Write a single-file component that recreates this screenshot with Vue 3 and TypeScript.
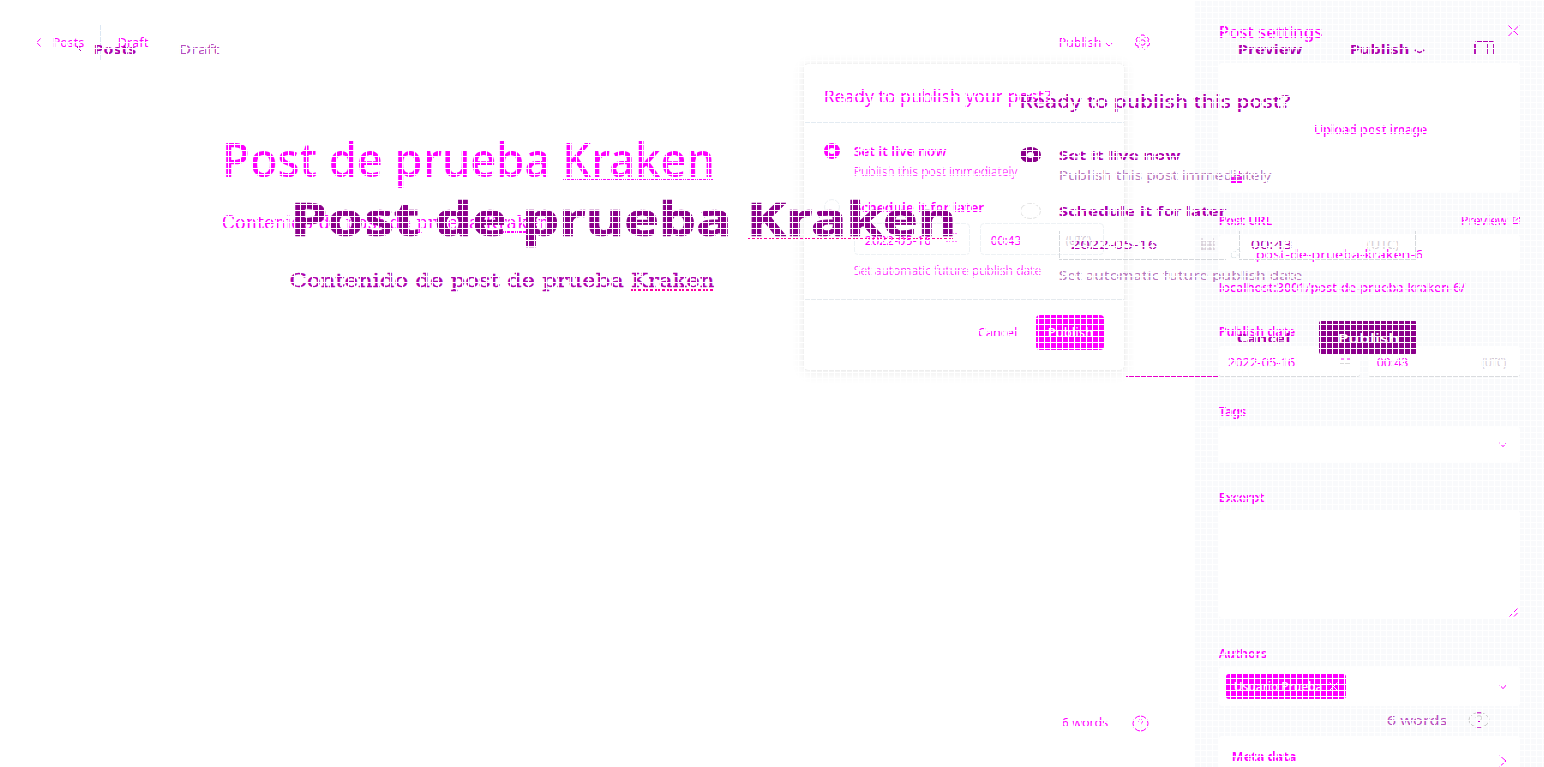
<script setup lang="ts">
import type { Directive } from 'vue'

// Stretches a line of text horizontally so its ink spans the given width.
const vFit: Directive<HTMLElement, number> = {
  mounted(el, binding) {
    const size = parseFloat(getComputedStyle(el).fontSize)
    const natural = el.getBoundingClientRect().width
    const scale = binding.value / (natural - size * 0.04)
    el.style.transformOrigin = '0 50%'
    el.style.transform = `translateX(${-size * 0.02 * scale}px) scaleX(${scale})`
    el.style.marginRight = `${binding.value - natural}px`
  },
}
</script>

<template>
  <div class="board">
    <div class="screen first">
      <main class="editor">
        <header class="bar">
          <svg class="back" width="5" height="9" viewBox="0 0 5 9"><path d="M4.5 .5 .8 4.5 4.5 8.5" /></svg>
          <span v-fit="31" class="t posts">Posts</span>
          <i class="rule"></i>
          <span v-fit="30" class="t">Draft</span>
          <span v-fit="42" class="t publish">Publish</span>
          <svg class="caret" width="8" height="5" viewBox="0 0 8 5"><path d="M.5 .7 4 4 7.500 .7" /></svg>
          <svg class="gear" width="17" height="17" viewBox="0 0 17 17">
            <circle cx="8.500" cy="8.500" r="2.700" />
            <path d="M7 1h3l.6 2.200 2.200-.5 2 2.500-1 2 1.800 1.500-.6 2.800-2.200.3-.1 2.200-2.500 1.200L8.500 13.500 6.700 15.200 4.200 14l-.1-2.200-2.200-.3-.6-2.800 1.800-1.500-1-2 2-2.500 2.200.5z" />
          </svg>
        </header>
        <h1><span v-fit="491" class="t">Post de prueba Kraken</span></h1>
        <i class="spell title-spell"></i>
        <p class="body"><span v-fit="327" class="t">Contenido de post de prueba Kraken</span></p>
        <i class="spell body-spell"></i>
        <footer class="foot">
          <span v-fit="46" class="t">6 words</span>
          <svg width="17" height="17" viewBox="0 0 17 17"><circle cx="8.500" cy="8.500" r="7.500" /><path d="M6.500 6.500c.2-2.600 4.200-2.400 4 0-.1 1.300-1.700 1.400-1.800 3M8.700 11.300v1" /></svg>
        </footer>
      </main>

      <aside class="side">
        <header class="side-head">
          <span v-fit="103" class="t">Post settings</span>
          <svg width="12" height="12" viewBox="0 0 12 12"><path d="M.5 .5 11 11M11 .5 .5 11" /></svg>
        </header>
        <div class="card image-card">
          <div class="upload"><span v-fit="113" class="t">Upload post image</span></div>
          <i class="unsplash"></i>
        </div>
        <div class="label spread">
          <span v-fit="53" class="t">Post URL</span>
          <span class="open">
            <span v-fit="46" class="t">Preview</span>
            <svg width="8" height="8" viewBox="0 0 8 8"><path d="M3.500 1H1v6.500h6V4.500M4 4.500 7.500 .5M5 .5h2.500V3" /></svg>
          </span>
        </div>
        <div class="card field url">
          <svg width="11" height="12" viewBox="0 0 11 12"><circle cx="4" cy="8" r="3" /><path d="M5 5l3-3 2 2-1 5" /></svg>
          <span v-fit="167" class="t">post-de-prueba-kraken-6</span>
        </div>
        <div class="hint"><span v-fit="246" class="t">localhost:3001/post-de-prueba-kraken-6/</span></div>
        <div class="label date-label"><span v-fit="76" class="t">Publish date</span></div>
        <div class="dates">
          <div class="card date">
            <span v-fit="67" class="t">2022-05-16</span>
            <svg width="11" height="13" viewBox="0 0 11 13"><path d="M1 2h9M1 7h3M7 7h3" /><path class="mute" d="M0 11.500h11" /></svg>
          </div>
          <div class="card time"><span v-fit="31" class="t">00:43</span><span v-fit="24" class="t zone">(UTC)</span></div>
        </div>
        <div class="label"><span v-fit="27" class="t">Tags</span></div>
        <div class="card select tags"><svg width="8" height="6" viewBox="0 0 8 6"><path d="M.5 .7 4 4.700 7.500 .7" /></svg></div>
        <div class="label"><span v-fit="45" class="t">Excerpt</span></div>
        <div class="card excerpt"><svg width="9" height="9" viewBox="0 0 9 9"><path d="M.5 8.500l8-8M5 8.500l3.500-3.500" /></svg></div>
        <div class="label authors-label"><span v-fit="48" class="t">Authors</span></div>
        <div class="card select authors">
          <div class="chip">
            <span v-fit="88" class="t">Usuario Prueba</span>
            <svg width="9" height="9" viewBox="0 0 9 9"><path d="M.5 .5l8 8M8.500 .5l-8 8" /></svg>
          </div>
          <svg width="8" height="6" viewBox="0 0 8 6"><path d="M.5 .7 4 4.700 7.500 .7" /></svg>
        </div>
        <div class="card meta">
          <span v-fit="64" class="t">Meta data</span>
          <svg width="8" height="12" viewBox="0 0 8 12"><path d="M.7 .5 7 6 .7 11.500" /></svg>
        </div>
      </aside>

      <section class="dialog">
        <header><span v-fit="227" class="t">Ready to publish your post?</span></header>
        <div class="choices">
          <div class="choice">
            <i class="dot on"></i>
            <div>
              <div class="strong"><span v-fit="92" class="t">Set it live now</span></div>
              <div class="note"><span v-fit="163" class="t">Publish this post immediately</span></div>
            </div>
          </div>
          <div class="choice later">
            <i class="dot"></i>
            <div>
              <div class="strong"><span v-fit="130" class="t">Schedule it for later</span></div>
              <div class="when">
                <div class="box">
                  <span v-fit="66" class="t">2022-05-16</span>
                  <svg width="11" height="9" viewBox="0 0 11 9"><path d="M0 1h4M7 1h4M0 8h4M6 8h5" /></svg>
                </div>
                <div class="box clock"><span v-fit="30" class="t">00:43</span><span v-fit="25" class="t zone">(UTC)</span></div>
              </div>
              <div class="note"><span v-fit="187" class="t">Set automatic future publish date</span></div>
            </div>
          </div>
        </div>
        <footer><span v-fit="39" class="t">Cancel</span><div class="go"><span v-fit="45" class="t">Publish</span></div></footer>
      </section>
    </div>

    <div class="screen second">
      <header class="bar2">
        <svg class="back2" width="8" height="9" viewBox="0 0 8 9"><path d="M6.500 4 3 4l4 4" /></svg>
        <span v-fit="42" class="t b">Posts</span>
        <span v-fit="40" class="t draft2">Draft</span>
        <span v-fit="64" class="t b preview2">Preview</span>
        <span v-fit="59" class="t b publish2">Publish</span>
        <svg class="caret2" width="11" height="5" viewBox="0 0 11 5"><path d="M.8 .8Q5.500 6 10.200 .8" /></svg>
        <svg class="panel2" width="21" height="14" viewBox="0 0 21 14"><path d="M1 13V3M1.500 .5h18M20 3v10M14 3v10" /></svg>
      </header>
      <h1><span v-fit="663" class="t">Post de prueba Kraken</span></h1>
      <i class="spell title-spell"></i>
      <p class="body"><span v-fit="424" class="t">Contenido de post de prueba Kraken</span></p>
      <i class="spell body-spell"></i>

      <section class="dialog2">
        <div class="head2"><span v-fit="270" class="t">Ready to publish this post?</span></div>
        <div class="choice2">
          <i class="dot2 on"></i>
          <div>
            <div class="strong"><span v-fit="121" class="t">Set it live now</span></div>
            <div class="note"><span v-fit="212" class="t">Publish this post immediately</span></div>
          </div>
        </div>
        <div class="choice2 later2">
          <i class="dot2"></i>
          <div>
            <div class="strong"><span v-fit="167" class="t">Schedule it for later</span></div>
            <div class="when2">
              <div class="box2 day2">
                <span v-fit="86" class="t">2022-05-16</span>
                <svg width="17" height="13" viewBox="0 0 17 13"><path d="M1 3h15M1 7h15M1 11h15M3 0v12M7 2v10M11 2v10M14 0v12" /></svg>
              </div>
              <div class="box2 hour2"><span v-fit="41" class="t">00:43</span><span v-fit="32" class="t zone">(UTC)</span></div>
            </div>
            <div class="note"><span v-fit="243" class="t">Set automatic future publish date</span></div>
          </div>
        </div>
        <div class="actions2"><span v-fit="53" class="t b">Cancel</span><div class="go2"><span v-fit="61" class="t">Publish</span></div></div>
      </section>
      <i class="edge"></i>
      <footer class="foot2">
        <span v-fit="60" class="t">6 words</span>
        <svg width="22" height="16" viewBox="0 0 22 16"><ellipse cx="11" cy="8" rx="10" ry="7.300" /><path d="M8 6c0-3 6-3 6 0 0 2-3 2-3 4" /><path class="pink" d="M9 .8h4M9 15.200h4M10 9.500h2" /></svg>
      </footer>
    </div>
    <div class="mesh"></div>
  </div>
</template>

<style>
body { background: #fff; overflow: hidden; }
</style>

<style scoped>
.board { position: relative; width: 1544px; height: 767px; overflow: hidden; background: #fff; font-family: "Noto Sans", "Open Sans", sans-serif; font-size: 12.5px; line-height: 20px; color: #f0f; }
.board * { box-sizing: border-box; }
.screen { position: absolute; inset: 0; }
.first { display: flex; }
.t { display: inline-block; flex: none; white-space: nowrap; }
.side .t, .note .t, .box2 .t { translate: 0 1px; }
i { display: block; flex: none; }
svg { display: block; flex: none; fill: none; stroke: #f0f; }
h1, p { margin: 0; }
.mesh { position: absolute; inset: 0; pointer-events: none; background: repeating-linear-gradient(90deg, #fff 0 1px, transparent 1px 6px), repeating-linear-gradient(#fff 0 1px, transparent 1px 6px); }

.editor { width: 1195px; flex: none; height: 767px; display: flex; flex-direction: column; }
.bar { height: 129px; padding: 33px 0 0 36px; display: flex; align-items: flex-start; }
.back { margin: 5px 12px 0 0; }
.posts { margin-right: 0; }
.rule { width: 1px; height: 36px; margin: -9px 17px 0 16px; background: #dbe7f3; }
.publish { margin-left: 911px; }
.caret { margin: 9px 0 0 4px; }
.gear { margin: 1px 0 0 21px; }
.first h1 { height: 59px; padding-left: 223px; font-size: 48px; line-height: 60px; font-weight: 500; }
.spell { height: 1px; background: repeating-linear-gradient(90deg, currentColor 0 3px, transparent 3px 4px); }
.first .title-spell { width: 150px; margin: -9px 0 0 563px; }
.body { font-family: "DejaVu Serif", serif; font-size: 19px; line-height: 26px; }
.first .body { height: 26px; margin-top: 29px; padding-left: 222px; }
.first .body-spell { width: 62px; margin: -4px 0 0 487px; height: 2px; }
.foot { margin-top: 480px; padding-left: 1062px; display: flex; align-items: flex-start; }
.foot svg { margin: 2px 0 0 24px; }

.side { width: 349px; height: 767px; padding: 0 24px; overflow: hidden; background: #f9fafc; }
.side-head { height: 63px; padding-top: 21px; display: flex; justify-content: space-between; font-size: 17px; font-weight: 500; }
.side-head svg { margin-top: 4px; }
.card { background: #fff; border-radius: 3px; }
.image-card { height: 129px; padding: 49px 12px 0; }
.upload { width: 135px; height: 34px; margin: 0 auto 0 72px; padding: 7px 0 0 11px; border-radius: 4px; font-weight: 500; }
.unsplash { width: 12px; height: 12px; margin-top: 25px; background: linear-gradient(#fff, #fff) 50% 0 / 4px 3px no-repeat, linear-gradient(#f0f, #f0f) 50% 0 / 5px 5px no-repeat, linear-gradient(#f0f, #f0f) 0 100% / 12px 6px no-repeat; }
.label { height: 20px; margin-top: 24px; font-weight: 600; }
.spread { margin-top: 18px; display: flex; justify-content: space-between; }
.open { display: flex; align-items: center; gap: 5px; font-weight: 400; }
.field { height: 36px; margin-top: 5px; padding: 6px 0 0 11px; display: flex; }
.url { font-size: 13px; padding-top: 8px; }
.url svg { margin: 4px 15px 0 0; stroke: #dfe6ea; }
.hint { height: 20px; margin-top: 6px; font-weight: 500; }
.dates { display: flex; gap: 8px; height: 31px; margin-top: 5px; }
.date, .time { padding: 6px 9px 0; display: flex; justify-content: space-between; border-bottom: 1px solid #dadcdf; }
.date { width: 141px; border-top: 0; }
.time { flex: 1; padding-right: 14px; }
.zone { color: #d3c9d5; }
.mute { stroke: #d9d9d9; }
.select { display: flex; align-items: center; justify-content: flex-end; padding-right: 13px; }
.tags { height: 36px; margin-top: 6px; }
.excerpt { height: 107px; margin-top: 4px; display: flex; align-items: flex-end; justify-content: flex-end; padding: 0 2px 1px 0; }
.authors-label { margin-top: 25px; }
.authors { height: 39px; margin-top: 4px; padding-left: 7px; justify-content: space-between; }
.chip { width: 120px; height: 25px; padding: 2px 8px; display: flex; align-items: flex-start; justify-content: space-between; background: #f0f; border-radius: 3px; color: #fff; font-weight: 500; }
.chip svg { margin-top: 6px; stroke: #fff; }
.meta { height: 60px; margin-top: 30px; padding: 10px 13px 0; display: flex; justify-content: space-between; font-weight: 700; }
.meta svg { margin-top: 9px; }

.dialog { position: absolute; left: 804px; top: 64px; width: 320px; height: 306px; background: #fff; border-radius: 4px; box-shadow: 0 2px 14px rgba(0, 0, 0, .09), 0 0 1px rgba(0, 0, 0, .18); font-size: 12px; }
.dialog header { height: 59px; padding: 22px 20px 0; border-bottom: 1px solid #e3ebf2; font-size: 17.5px; font-weight: 400; }
.choices { height: 177px; padding: 18px 20px 0; border-bottom: 1px solid #e5eaee; }
.choice { display: flex; gap: 14px; }
.dot { width: 16px; height: 16px; margin-top: 2px; border: 1px solid #edf1f4; border-radius: 50%; }
.dot.on { border: 5px solid #f0f; }
.strong { height: 20px; font-weight: 600; font-size: 13px; }
.note { height: 20px; }
.choice .note { font-weight: 300; }
.later { margin-top: 16px; }
.when { display: flex; gap: 10px; height: 32px; margin: 6px 0 5px; }
.box { width: 116px; height: 32px; padding: 7px 12px 0 10px; display: flex; justify-content: space-between; border: 1px solid #eef2f5; border-radius: 4px; }
.box svg { margin-top: 2px; }
.clock { width: 124px; }
.dialog footer { display: flex; padding: 15px 20px 0 174px; justify-content: space-between; line-height: 36px; }
.go { width: 68px; height: 35px; padding-left: 12px; background: #f0f; border-radius: 4px; color: #fff; font-weight: 500; }

.second { color: #ad00ad; }
.second svg { stroke: #ad00ad; }
.b { font-weight: 700; }
.bar2 { height: 180px; padding: 39px 0 0 74px; display: flex; align-items: flex-start; font-size: 13px; }
.back2 { margin: 4px 12px 0 0; }
.draft2 { margin-left: 43px; color: #b84cbc; }
.preview2 { margin-left: 1019px; }
.publish2 { margin-left: 48px; }
.caret2 { margin: 10px 0 0 5px; stroke-width: 1.500px; }
.second .panel2 { margin: 2px 0 0 49px; stroke-width: 1.800px; }
.second h1 { height: 66px; padding-left: 292px; font-size: 47px; line-height: 76px; font-weight: 700; color: #8b008b; -webkit-text-stroke: .7px #8b008b; }
.second .spell { color: #ff00a0; }
.second .title-spell { width: 205px; margin: -8px 0 0 748px; }
.second .body { height: 26px; margin-top: 28px; padding-left: 290px; -webkit-text-stroke: .35px #ad00ad; }
.second .body-spell { width: 84px; height: 2px; margin: -4px 0 0 630px; }
.dialog2 { position: absolute; left: 1020px; top: 91px; width: 397px; }
.head2 { height: 54px; font-size: 17.500px; font-weight: 500; }
.choice2 { display: flex; gap: 18px; }
.dot2 { width: 21px; height: 16px; margin-top: 2px; border: 1px solid #e4e4e4; border-radius: 50%; }
.dot2.on { border: 5px solid #8b008b; border-width: 5px 7px; }
.choice2 .note { color: #b878bd; }
.choice2 .zone { color: #d3ced4; }
.choice2 .strong { font-weight: 700; }
.later2 { margin-top: 16px; }
.when2 { display: flex; gap: 13px; height: 29px; margin: 10px 0 5px; }
.box2 { height: 29px; padding: 3px 16px 0 11px; display: flex; justify-content: space-between; border: 1px solid #d5d8dc; border-top: 0; }
.day2 { width: 167px; padding-right: 10px; border-right: 0; }
.box2 svg { margin-top: 4px; stroke: #ccc0cc; }
.hour2 { width: 177px; }
.actions2 { display: flex; justify-content: space-between; margin-top: 36px; padding-left: 217px; line-height: 35px; font-size: 13px; }
.go2 { width: 98px; height: 33px; padding-left: 19px; background: #8b008b; border-radius: 2px; color: #fff; font-weight: 600; }
.edge { position: absolute; left: 1126px; top: 376px; width: 92px; height: 1px; background: #e500c8; }
.foot2 { position: absolute; left: 1387px; top: 710px; display: flex; font-size: 13px; color: #b84cbc; }
.foot2 svg { margin: 2px 0 0 21px; stroke: #c8c8c8; }
.foot2 .pink { stroke: #ce00ce; }
</style>
